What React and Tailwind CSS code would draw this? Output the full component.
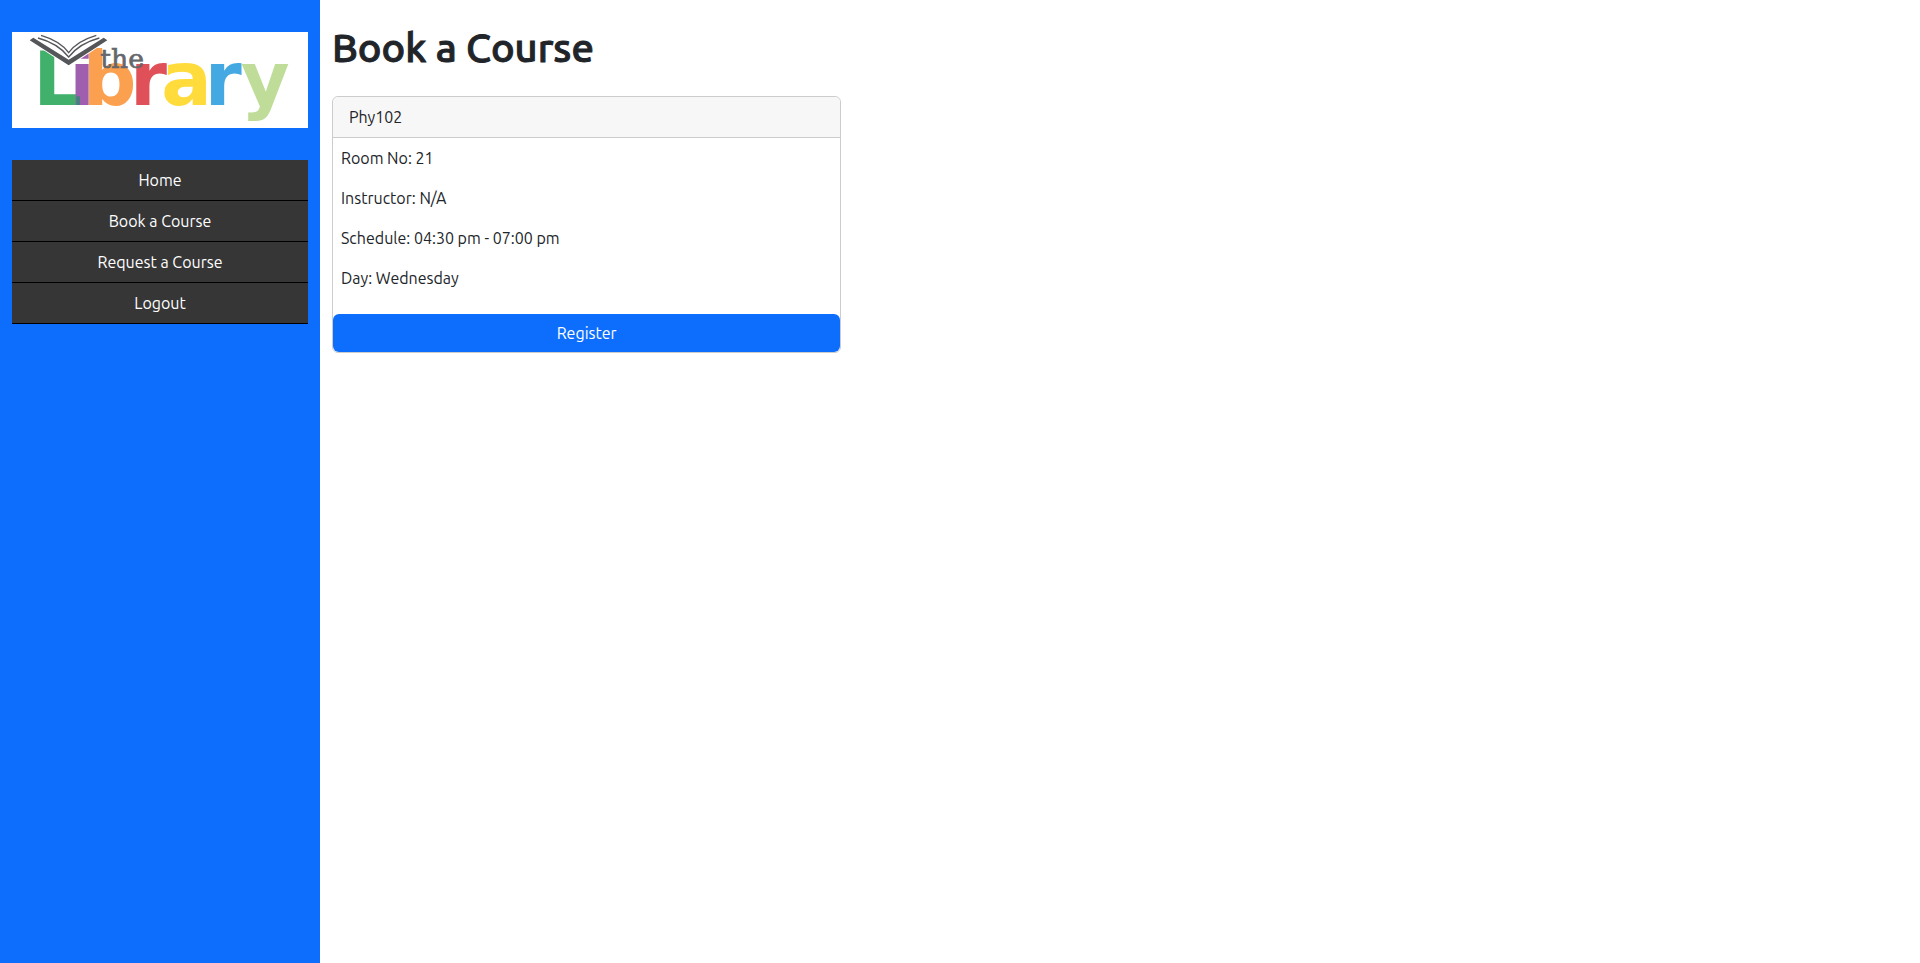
const navItems = ["Home", "Book a Course", "Request a Course", "Logout"];

const courses = [
  {
    name: "Phy102",
    details: [
      "Room No: 21",
      "Instructor: N/A",
      "Schedule: 04:30 pm - 07:00 pm",
      "Day: Wednesday",
    ],
  },
];

const letters = [
  { char: "L", x: 100, fill: "#41b06b" },
  { char: "i", x: 208, fill: "#a05fae" },
  { char: "b", x: 248, fill: "#fba04f" },
  { char: "r", x: 390, fill: "#df5058" },
  { char: "a", x: 484, fill: "#ffdc3c" },
  { char: "r", x: 614, fill: "#44a9e2" },
  { char: "y", x: 722, fill: "#bfdc98" },
];

function LibraryLogo() {
  return (
    <svg
      viewBox="36 36 888 288"
      role="img"
      aria-label="the Library"
      className="block h-24 w-full bg-white"
    >
      <text y="255" className="font-['DejaVu_Sans',sans-serif] text-[225px] font-bold">
        {letters.map(({ char, x, fill }) => (
          <tspan key={x} x={x} fill={fill}>
            {char}
          </tspan>
        ))}
      </text>
      <rect x="229" y="229" width="11" height="26" fill="#45807f" />
      <text
        x="301"
        y="143"
        fill="#66676b"
        stroke="#66676b"
        strokeWidth="2"
        className="font-['DejaVu_Serif',serif] text-[80px]"
      >
        the
      </text>
      <path d="M112 78 L206 140 L300 78 L292 40 L120 40 Z" fill="#fff" />
      <path d="M89 61 L100 53 L206 119 L311 53 L322 61 L206 136 Z" fill="#55565a" />
      <g fill="none" stroke="#55565a" strokeWidth="4">
        <path d="M114 54 Q174 70 206 111 Q238 70 298 54" />
        <path d="M123 46 Q181 63 206 98 Q231 63 289 46" />
      </g>
    </svg>
  );
}

function Sidebar() {
  return (
    <aside className="w-1/6 shrink-0 bg-[#0d6efd] px-3 py-8">
      <LibraryLogo />
      <nav className="mt-8">
        <ul>
          {navItems.map((item) => (
            <li key={item} className="border-b border-black">
              <a href="#" className="block bg-[#363636] py-2 text-center text-white">
                {item}
              </a>
            </li>
          ))}
        </ul>
      </nav>
    </aside>
  );
}

function CourseCard({ course }) {
  return (
    <article className="flex flex-col rounded-md border border-[#cccccc] bg-white">
      <h2 className="rounded-t-md border-b border-[#cccccc] bg-[#f7f7f7] px-4 py-2">
        {course.name}
      </h2>
      <div className="flex flex-col gap-4 px-2 pt-2 pb-6">
        {course.details.map((detail) => (
          <p key={detail}>{detail}</p>
        ))}
      </div>
      <button type="button" className="rounded-md bg-[#0d6efd] py-[7px] text-white">
        Register
      </button>
    </article>
  );
}

export default function App() {
  return (
    <div className="flex min-h-screen bg-white font-[Ubuntu,'Noto_Sans',sans-serif] text-base leading-6 text-[#212529]">
      <Sidebar />
      <main className="min-w-0 flex-1 px-3 py-6">
        <h1 className="mb-6 text-[40px] leading-12 font-medium [-webkit-text-stroke:1px_#212529]">
          Book a Course
        </h1>
        <div className="grid grid-cols-3 gap-6">
          {courses.map((course) => (
            <CourseCard key={course.name} course={course} />
          ))}
        </div>
      </main>
    </div>
  );
}
